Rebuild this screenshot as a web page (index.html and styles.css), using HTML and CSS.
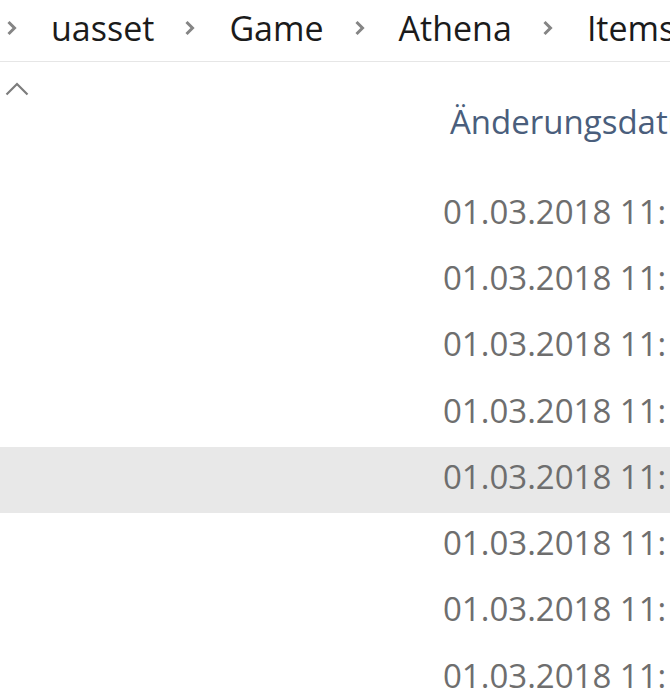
FILE: index.html
```html
<!DOCTYPE html>
<html lang="de">
<head>
    <meta charset="UTF-8">
    <title>Items</title>
    <link rel="stylesheet" href="styles.css">
</head>
<body>
    <nav class="crumbs">
        <span class="sep"><svg viewBox="0 0 11 16" width="11" height="16"><path d="M2.5 2 L8.5 8 L2.5 14" /></svg></span>
        <span class="crumb">uasset</span>
        <span class="sep"><svg viewBox="0 0 11 16" width="11" height="16"><path d="M2.5 2 L8.5 8 L2.5 14" /></svg></span>
        <span class="crumb">Game</span>
        <span class="sep"><svg viewBox="0 0 11 16" width="11" height="16"><path d="M2.5 2 L8.5 8 L2.5 14" /></svg></span>
        <span class="crumb">Athena</span>
        <span class="sep"><svg viewBox="0 0 11 16" width="11" height="16"><path d="M2.5 2 L8.5 8 L2.5 14" /></svg></span>
        <span class="crumb">Items</span>
    </nav>
    <section class="list">
        <div class="list-head">
            <div class="sort"><svg viewBox="0 0 24 14" width="24" height="14"><path d="M1.5 12.5 L12 2 L22.5 12.5" /></svg></div>
            <div class="col-title">Änderungsdatum</div>
        </div>
        <div class="row"><span class="date">01.03.2018 11:</span></div>
        <div class="row"><span class="date">01.03.2018 11:</span></div>
        <div class="row"><span class="date">01.03.2018 11:</span></div>
        <div class="row"><span class="date">01.03.2018 11:</span></div>
        <div class="row hover"><span class="date">01.03.2018 11:</span></div>
        <div class="row"><span class="date">01.03.2018 11:</span></div>
        <div class="row"><span class="date">01.03.2018 11:</span></div>
        <div class="row"><span class="date">01.03.2018 11:</span></div>
    </section>
</body>
</html>
```

FILE: styles.css
```css
html, body {
    margin: 0;
    height: 100%;
    overflow: hidden;
    background: #ffffff;
}
body {
    font-family: "Open Sans", "Noto Sans", sans-serif;
    white-space: nowrap;
}
.crumbs {
    display: flex;
    align-items: center;
    box-sizing: border-box;
    height: 62px;
    padding: 0 0 5px 6px;
    border-bottom: 1px solid #e6e6e6;
    color: #1b1b1b;
    font-size: 34px;
    line-height: 34px;
    overflow: hidden;
}
.sep {
    display: flex;
    width: 11px;
    margin-right: 34px;
}
.sep svg path {
    fill: none;
    stroke: #858585;
    stroke-width: 3;
}
.crumb {
    margin-right: 30px;
}
.list {
    overflow: hidden;
}
.list-head {
    height: 120px;
}
.sort {
    padding: 20px 0 0 5px;
    height: 14px;
}
.sort svg {
    display: block;
}
.sort svg path {
    fill: none;
    stroke: #7d7d7d;
    stroke-width: 2.2;
}
.col-title {
    padding: 3px 0 0 450px;
    font-size: 33px;
    color: #4a5e7c;
    overflow: hidden;
}
.row {
    box-sizing: border-box;
    height: 66.3px;
    display: flex;
    align-items: center;
    padding: 0 0 8px 443px;
}
.row.hover {
    background: #e8e8e8;
}
.date {
    font-size: 33px;
    color: #6e6e6e;
}
```
